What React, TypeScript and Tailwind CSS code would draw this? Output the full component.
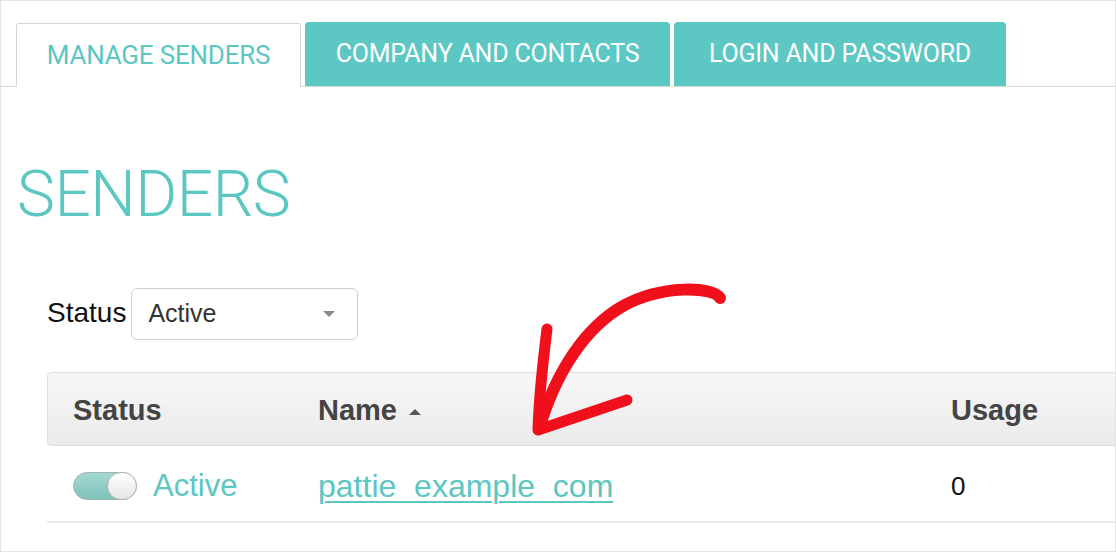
import React from "react";

const din = { fontFamily: "Roboto, 'Open Sans', sans-serif" };
const arial = { fontFamily: "'Liberation Sans', Arial, sans-serif" };

const Tab = ({ label, active, className }: { label: string; active?: boolean; className: string }) => (
  <div
    className={
      active
        ? `h-[64px] -mb-px flex items-center justify-center rounded-t-[3px] border border-b-0 border-[#d6d6d6] bg-white text-[#5cc6c1] ${className}`
        : `h-[64px] flex items-center justify-center rounded-t-[4px] bg-[#5dc7c3] text-white ${className}`
    }
  >
    <span className={active ? "text-[26px] tracking-[-0.2px]" : "text-[25px] tracking-[-0.2px]"} style={din}>
      {label}
    </span>
  </div>
);

const Arrow = () => (
  <svg className="absolute left-0 top-0 pointer-events-none" width="1116" height="552" viewBox="0 0 1116 552">
    <path
      d="M719 297 C 712 285, 660 284, 622 305 C 585 326, 555 370, 538 428"
      fill="none"
      stroke="#f0101c"
      strokeWidth="12"
      strokeLinecap="round"
      strokeLinejoin="round"
    />
    <path
      d="M546 328 C 542 360, 538 395, 537 429 L 626 399"
      fill="none"
      stroke="#f0101c"
      strokeWidth="11"
      strokeLinecap="round"
      strokeLinejoin="round"
    />
  </svg>
);

export default function App() {
  return (
    <div className="relative w-[1116px] h-[552px] overflow-hidden bg-white border border-[#e4e4e4]">
      {/* tabs */}
      <div className="mt-[21px] flex items-end border-b border-[#dadada] pl-[15px]">
        <Tab label="MANAGE SENDERS" active className="w-[285px]" />
        <Tab label="COMPANY AND CONTACTS" className="ml-[4px] w-[365px]" />
        <Tab label="LOGIN AND PASSWORD" className="ml-[4px] w-[332px]" />
      </div>

      <h1 className="mt-[68px] ml-[16px] text-[64px] leading-[80px] font-light text-[#5cc6c1] tracking-[-0.5px]" style={din}>
        SENDERS
      </h1>

      {/* filter */}
      <div className="mt-[53px] ml-[46px] flex items-center gap-[5px]">
        <span className="text-[28px] text-[#111] pb-[3px]" style={arial}>Status</span>
        <div className="w-[227px] h-[52px] rounded-[6px] border border-[#cfcfcf] flex items-center justify-between pl-[16px] pr-[22px]">
          <span className="text-[25px] text-[#333]" style={arial}>Active</span>
          <span className="w-0 h-0 border-l-[6px] border-r-[6px] border-t-[6px] border-l-transparent border-r-transparent border-t-[#8a8a8a]" />
        </div>
      </div>

      {/* table */}
      <div className="mt-[32px] ml-[46px] w-[1090px]" style={arial}>
        <div className="h-[74px] pt-[3px] flex items-center rounded-l-[4px] border border-[#e0e0e0] bg-gradient-to-b from-[#f7f7f7] to-[#ebebeb] text-[29px] font-bold text-[#444]">
          <div className="w-[270px] pl-[25px]">Status</div>
          <div className="w-[633px] flex items-center gap-[12px]">
            Name
            <span className="w-0 h-0 border-l-[6px] border-r-[6px] border-b-[6px] border-l-transparent border-r-transparent border-b-[#555] mt-[2px]" />
          </div>
          <div>Usage</div>
        </div>
        <div className="h-[77px] pt-[6px] flex items-center border-b-2 border-[#e8e8e8] text-[31px]">
          <div className="w-[271px] pl-[26px] flex items-center gap-[16px]">
            <span className="relative w-[64px] h-[28px] -mt-[2px] rounded-full border border-[#9bb5b3] bg-gradient-to-b from-[#a6d8d3] to-[#7fc1bb]">
              <span className="absolute right-[-1px] top-[-1px] w-[30px] h-[28px] rounded-full border border-[#b5b5b5] bg-gradient-to-b from-white to-[#e6e6e6]" />
            </span>
            <span className="text-[#5cc6c1]">Active</span>
          </div>
          <div className="w-[633px]">
            <a className="text-[32px] text-[#5cc6c1] underline decoration-2 underline-offset-[4px]" href="#">pattie_example_com</a>
          </div>
          <div className="text-[26px] text-[#111]">0</div>
        </div>
      </div>

      <Arrow />
    </div>
  );
}
